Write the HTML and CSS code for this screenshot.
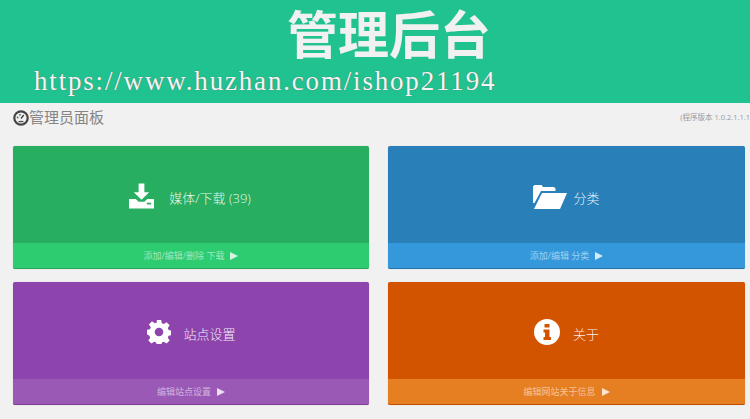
FILE: index.html
```html
<!DOCTYPE html>
<html lang="zh">
<head>
<meta charset="utf-8">
<title>管理后台</title>
<link rel="stylesheet" href="styles.css">
</head>
<body>
<header class="banner">
  <h1 class="banner-title">管理后台</h1>
  <div class="banner-url">https://www.huzhan.com/ishop21194</div>
</header>
<div class="titlebar">
  <div class="panel-title">
    <svg class="gauge" viewBox="0 0 16 16" aria-hidden="true">
      <circle cx="8" cy="8" r="6.700" fill="#f1f1f1" stroke="#444" stroke-width="2.200"/>
      <path d="M8 8.500 10.800 5" stroke="#444" stroke-width="1.400" fill="none"/>
      <circle cx="4.600" cy="7.400" r=".9" fill="#555"/>
      <circle cx="7" cy="4.800" r=".9" fill="#555"/>
      <path d="M4.500 12.200a5 5 0 0 1 7 0" fill="#555"/>
    </svg>
    <span>管理员面板</span>
  </div>
  <div class="version">(程序版本 1.0.2.1.1.1</div>
</div>
<main class="grid">
  <a class="card card-green">
    <div class="card-body">
      <svg class="icon icon-download" viewBox="0 0 26 26" aria-hidden="true">
        <path fill="#fff" d="M10 0h6v9h5l-8 8-8-8h5zM0 16h7l3 3h6l3-3h7v10H0z"/>
        <rect x="18.500" y="20" width="4.500" height="1.800" fill="#27ae60"/>
      </svg>
      <span class="label">媒体/下载 (39)</span>
    </div>
    <div class="card-foot"><span>添加/编辑/删除 下载</span><i class="arrow"></i></div>
  </a>
  <a class="card card-blue">
    <div class="card-body">
      <svg class="icon icon-folder" viewBox="0 0 34 24" aria-hidden="true">
        <path fill="#fff" d="M0 1.500 1.500 0h7L10 2h11l1.500 1.500V6H8L1.500 18H0z"/>
        <path fill="#fff" d="M9 8h25l-7 16H1z"/>
      </svg>
      <span class="label">分类</span>
    </div>
    <div class="card-foot"><span>添加/编辑 分类</span><i class="arrow"></i></div>
  </a>
  <a class="card card-purple">
    <div class="card-body">
      <svg class="icon icon-cog" viewBox="0 0 24 24" aria-hidden="true">
        <path fill="#fff" fill-rule="evenodd" d="M9.800 0h4.400l.6 3.300 2 .8 2.800-1.900 3.100 3.100-1.900 2.800.8 2 3.300.6v4.400l-3.300.6-.8 2 1.900 2.800-3.100 3.100-2.800-1.900-2 .8-.6 3.300H9.800l-.6-3.300-2-.8-2.800 1.900-3.100-3.100 1.900-2.800-.8-2L-.3 14.200V9.800l3.300-.6.800-2-1.900-2.800 3.100-3.100 2.800 1.900 2-.8zM12 7.700a4.300 4.300 0 1 0 0 8.600 4.300 4.300 0 0 0 0-8.600z"/>
      </svg>
      <span class="label">站点设置</span>
    </div>
    <div class="card-foot"><span>编辑站点设置</span><i class="arrow"></i></div>
  </a>
  <a class="card card-orange">
    <div class="card-body">
      <svg class="icon icon-info" viewBox="0 0 26 26" aria-hidden="true">
        <circle cx="13" cy="13" r="13" fill="#fff"/>
        <path fill="#d35400" d="M10.500 5h5v3.500h-5zM9.500 10.500h6V18h1.500v3H9.500v-3H11v-4.500H9.500z"/>
      </svg>
      <span class="label">关于</span>
    </div>
    <div class="card-foot"><span>编辑网站关于信息</span><i class="arrow"></i></div>
  </a>
</main>
</body>
</html>
```
FILE: styles.css
```css
* { box-sizing: border-box; }
html, body { margin: 0; height: 100%; }
body {
  background: #f1f1f1;
  font-family: "Open Sans", "Noto Sans CJK SC", sans-serif;
  overflow: hidden;
}
.banner {
  height: 103px;
  background: #20c28f;
  display: flex;
  flex-direction: column;
}
.banner-title {
  margin: 0;
  padding-left: 287px;
  height: 65px;
  font-family: "Noto Sans CJK SC", sans-serif;
  font-size: 51px;
  font-weight: 700;
  line-height: 65px;
  color: #f1f1f1;
}
.banner-url {
  margin: 1px 0 0 34px;
  font-family: "Liberation Serif", serif;
  font-size: 27px;
  letter-spacing: 1.820px;
  line-height: 30px;
  color: #f4f4f4;
  text-shadow: 0 0 1px #666;
}
.titlebar {
  height: 43px;
  display: flex;
  justify-content: space-between;
  padding: 4px 0 0 13px;
}
.panel-title {
  display: flex;
  align-items: flex-start;
  color: #858585;
  font-size: 15px;
  line-height: 20px;
  font-family: "Noto Sans CJK SC", sans-serif;
}
.gauge { width: 16px; height: 16px; margin-top: 3px; }
.version {
  font-size: 7.500px;
  line-height: 18px;
  color: #999;
  white-space: nowrap;
  margin-top: 1px;
}
.grid {
  display: grid;
  grid-template-columns: 356px 357px;
  grid-auto-rows: 123px;
  column-gap: 19px;
  row-gap: 13px;
  padding-left: 13px;
}
.card {
  display: flex;
  flex-direction: column;
  border-radius: 2px;
  color: rgba(255, 255, 255, .92);
  overflow: hidden;
  border-bottom: 1px solid;
  box-shadow: 0 0 1px rgba(0, 0, 0, .25);
}
.card-body {
  flex: 1;
  display: flex;
  align-items: center;
  justify-content: center;
  gap: 13px;
  font-size: 13px;
  font-weight: 300;
  padding-top: 2px;
}
.label { white-space: nowrap; margin-top: 4px; }
.card-foot {
  height: 25px;
  display: flex;
  align-items: center;
  justify-content: center;
  gap: 6px;
  font-size: 9px;
  color: rgba(255, 255, 255, .55);
}
.arrow {
  width: 0;
  height: 0;
  border-style: solid;
  border-width: 4.500px 0 4.500px 8px;
  border-color: transparent transparent transparent rgba(255, 255, 255, .8);
}
.icon { flex: none; }
.icon-download { width: 25px; height: 26px; margin: 0 2px 0 -2px; }
.icon-folder { width: 34px; height: 24px; margin: 2px -7px 0 0; }
.icon-cog { width: 24px; height: 24px; margin: 0 -1px 0 1px; }
.icon-info { width: 26px; height: 26px; }
.card-green { background: #27ae60; border-color: #26a65b; }
.card-green .card-foot { background: #2ecc71; }
.card-blue { background: #2980b9; border-color: #2574a9; }
.card-blue .card-foot { background: #3498db; }
.card-purple { background: #8e44ad; border-color: #7d3c98; }
.card-purple .card-foot { background: #9b59b6; }
.card-orange { background: #d35400; border-color: #c24d00; }
.card-orange .card-foot { background: #e67e22; }
```
